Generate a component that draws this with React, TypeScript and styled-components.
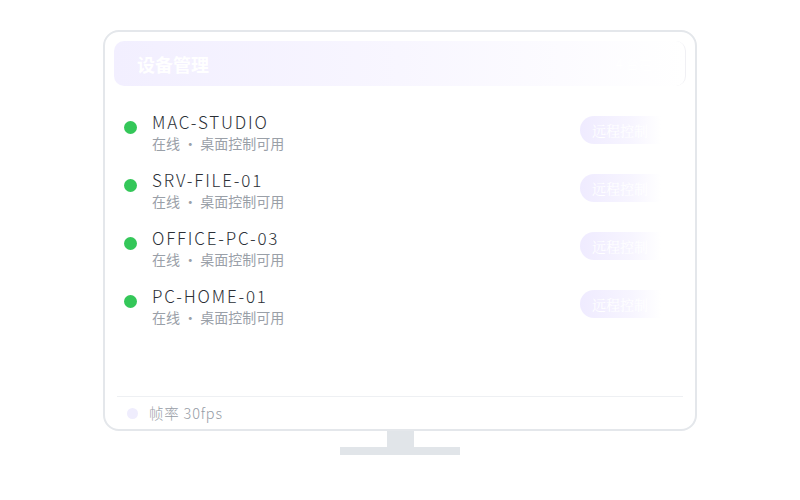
import React from 'react';
import styled, { createGlobalStyle } from 'styled-components';

const GlobalStyle = createGlobalStyle`
  html, body {
    margin: 0;
    padding: 0;
    background: #ffffff;
    font-family: "Noto Sans CJK SC", sans-serif;
  }
`;

const Stage = styled.div`
  width: 800px;
  height: 500px;
  display: flex;
  flex-direction: column;
  align-items: center;
  padding-top: 30px;
  box-sizing: border-box;
`;

const Screen = styled.div`
  width: 594px;
  height: 401px;
  box-sizing: border-box;
  border: 2px solid #e4e7eb;
  border-radius: 16px;
  background: #ffffff;
  padding: 9px 9px 0 9px;
  display: flex;
  flex-direction: column;
`;

const Header = styled.div`
  height: 45px;
  border-radius: 10px;
  background: linear-gradient(90deg, #f2efff 0%, #f8f6ff 50%, #ffffff 100%);
  display: flex;
  align-items: center;
  justify-content: space-between;
  padding: 0 0 0 23px;
  border-right: 1px solid #f0f0f4;
`;

const Title = styled.h1`
  margin: 0;
  font-size: 18px;
  font-weight: 700;
  color: #ffffff;
  font-family: "Noto Sans CJK SC", sans-serif;
`;

const HeaderMeta = styled.span`
  font-size: 13px;
  color: #ffffff;
  margin-right: 20px;
`;

const List = styled.div`
  flex: 1;
  display: flex;
  flex-direction: column;
  padding: 17px 10px 0 10px;
`;

const Row = styled.div`
  height: 58px;
  display: flex;
  align-items: center;
`;

const Dot = styled.span<{ $color: string }>`
  width: 13px;
  height: 13px;
  border-radius: 50%;
  background: ${p => p.$color};
  flex-shrink: 0;
  margin-right: 15px;
  margin-top: -10px;
`;

const Info = styled.div`
  flex: 1;
  display: flex;
  flex-direction: column;
`;

const Name = styled.div`
  font-size: 17px;
  font-weight: 300;
  color: #2b2f36;
  line-height: 22px;
  letter-spacing: 1.8px;
  font-family: "Noto Sans CJK SC", sans-serif;
`;

const Sub = styled.div`
  font-size: 14px;
  color: #9aa0a8;
  line-height: 20px;
  font-family: "Noto Sans CJK SC", sans-serif;
`;

const ControlButton = styled.button`
  width: 95px;
  height: 28px;
  border: none;
  border-radius: 14px;
  background: linear-gradient(90deg, #efebff 0%, #f7f5ff 55%, #ffffff 85%);
  color: #ffffff;
  font-size: 14px;
  font-family: "Noto Serif CJK SC", serif;
  text-align: left;
  padding: 0 0 0 12px;
  margin-right: 1px;
  margin-top: -4px;
`;

const Footer = styled.div`
  height: 32px;
  margin: 0 3px;
  border-top: 1px solid #eef0f3;
  display: flex;
  align-items: center;
  padding-left: 10px;
`;

const FooterDot = styled.span`
  width: 11px;
  height: 11px;
  border-radius: 50%;
  background: #efedfd;
  margin-right: 11px;
`;

const FooterText = styled.span`
  font-size: 14.5px;
  font-weight: 300;
  letter-spacing: 0.8px;
  color: #969ca5;
  font-family: "Noto Sans CJK SC", sans-serif;
  margin-top: -2px;
`;

const Neck = styled.div`
  width: 27px;
  height: 16px;
  background: #e1e5e9;
`;

const Base = styled.div`
  width: 120px;
  height: 8px;
  background: #e1e5e9;
`;

const devices = ['MAC-STUDIO', 'SRV-FILE-01', 'OFFICE-PC-03', 'PC-HOME-01'];

export default function App() {
  return (
    <>
      <GlobalStyle />
      <Stage>
        <Screen>
          <Header>
            <Title>设备管理</Title>
            <HeaderMeta>4 台在线</HeaderMeta>
          </Header>
          <List>
            {devices.map(d => (
              <Row key={d}>
                <Dot $color="#34c759" />
                <Info>
                  <Name>{d}</Name>
                  <Sub>在线 · 桌面控制可用</Sub>
                </Info>
                <ControlButton>远程控制</ControlButton>
              </Row>
            ))}
          </List>
          <Footer>
            <FooterDot />
            <FooterText>帧率 30fps</FooterText>
          </Footer>
        </Screen>
        <Neck />
        <Base />
      </Stage>
    </>
  );
}
